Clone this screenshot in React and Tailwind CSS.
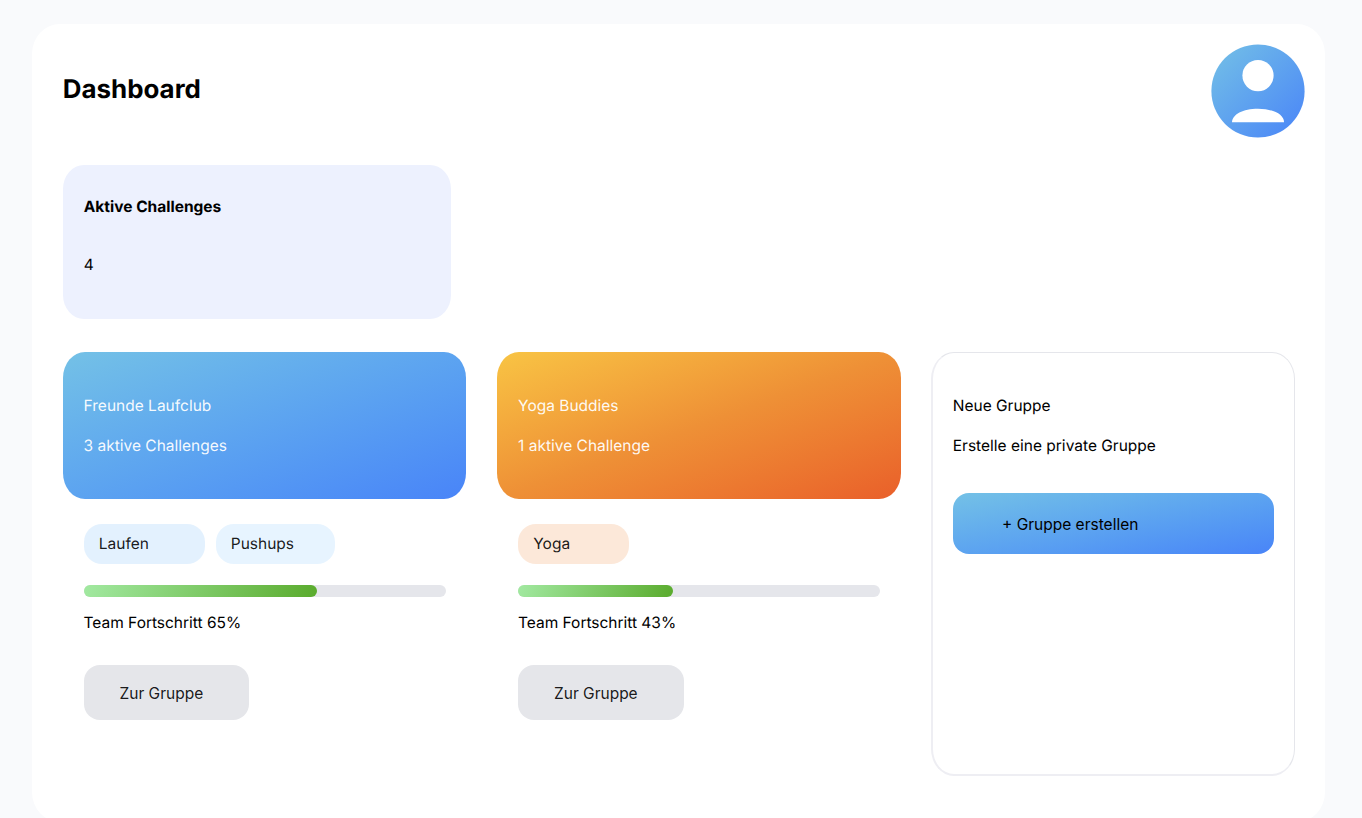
const groups = [
  {
    name: "Freunde Laufclub",
    info: "3 aktive Challenges",
    header: "from-[#74c1e6] to-[#4984f8]",
    tags: [
      { label: "Laufen", style: "w-[121px] bg-[#e3f1fe]" },
      { label: "Pushups", style: "w-[119px] bg-[#e7f4ff]" },
    ],
    bar: "w-[233px]",
    progress: 65,
  },
  {
    name: "Yoga Buddies",
    info: "1 aktive Challenge",
    header: "from-[#f8c444] via-[#ee9036] to-[#e95f2a]",
    tags: [{ label: "Yoga", style: "w-[111px] bg-[#fce8d9]" }],
    bar: "w-[155px]",
    progress: 43,
  },
];

function Avatar() {
  return (
    <svg className="block h-[94px] w-[94px]" viewBox="0 0 94 94">
      <defs>
        <linearGradient id="avatar" x1="0" y1="0" x2="1" y2="1">
          <stop offset="0" stopColor="#74c1e6" />
          <stop offset="1" stopColor="#4984f8" />
        </linearGradient>
      </defs>
      <circle cx="47" cy="47" r="46.6" fill="url(#avatar)" />
      <circle cx="47" cy="31.6" r="15.6" fill="#fff" />
      <path d="M21 78.2C21 70.5 32 64.7 47 64.7S73 70.5 73 78.2Z" fill="#fff" />
    </svg>
  );
}

function GroupCard({ group }) {
  return (
    <section className="w-[403.7px] shrink-0">
      <div className={`h-[147px] rounded-[22px/26px] bg-linear-to-br px-[20.8px] pt-[42px] text-white/95 ${group.header}`}>
        <h2>{group.name}</h2>
        <p className="mt-4">{group.info}</p>
      </div>
      <div className="px-[20.8px] pt-[26px]">
        <div className="flex gap-[11px]">
          {group.tags.map((tag) => (
            <span key={tag.label} className={`-mt-px h-10 rounded-[18px] pt-[7.5px] pl-[15.2px] text-black/90 ${tag.style}`}>
              {tag.label}
            </span>
          ))}
        </div>
        <div className="mt-[21px] h-3 w-[362px] rounded-[6px] bg-[#e5e6eb]">
          <div className={`h-3 rounded-[6px] bg-linear-[110deg] from-[#a2e9a1] to-[#5aab2d] ${group.bar}`} />
        </div>
        <p className="mt-[14px] tracking-[-0.02px]">Team Fortschritt {group.progress}%</p>
        <button className="mt-[30px] block h-[55px] w-[165.5px] rounded-[16px] bg-[#e5e6ea] pt-[3px] pr-[10px] text-black/90">
          Zur Gruppe
        </button>
      </div>
    </section>
  );
}

export default function App() {
  return (
    <div className="h-[818px] overflow-hidden bg-[#f9fafc] pt-6 pl-8 font-['Inter',sans-serif] text-[15.5px] leading-6 text-black [text-rendering:geometricPrecision]">
      <main className="h-[798px] w-[1293px] rounded-[28px/30px] bg-white pl-[30.8px]">
        <header className="flex h-[141px] justify-between pr-5">
          <h1 className="pt-[50px] text-[25.9px] leading-8 font-bold">Dashboard</h1>
          <div className="pt-5">
            <Avatar />
          </div>
        </header>
        <section className="h-[154px] w-[388px] rounded-[21px/24px] bg-[#edf1fe] px-[21px] pt-[30px]">
          <h2 className="font-bold">Aktive Challenges</h2>
          <p className="mt-[34px]">4</p>
        </section>
        <div className="mt-[33px] flex gap-[30.8px]">
          {groups.map((group) => (
            <GroupCard key={group.name} group={group} />
          ))}
          <section className="-ml-px h-[424px] w-[364px] shrink-0 rounded-[23px/27px] border border-b-2 border-l-2 border-t-[#e5e6eb] border-r-[#e5e6eb] border-b-[#eeeef3] border-l-[#eeeef3] pt-[41px] pl-5">
            <h2>Neue Gruppe</h2>
            <p className="mt-4">Erstelle eine private Gruppe</p>
            <button className="mt-[35px] block h-[61px] w-[321px] rounded-[16px] bg-linear-to-br from-[#74c1e6] to-[#4984f8] pt-[3px] pl-[49.3px] text-left">
              + Gruppe erstellen
            </button>
          </section>
        </div>
      </main>
    </div>
  );
}
